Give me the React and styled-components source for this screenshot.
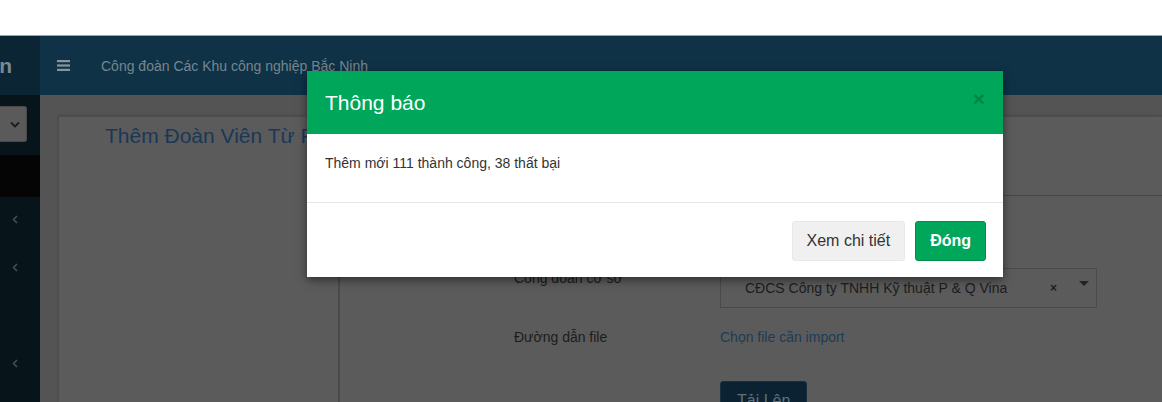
import React from 'react';
import styled, { createGlobalStyle } from 'styled-components';

const Global = createGlobalStyle`
  html, body { margin: 0; padding: 0; height: 100%; overflow: hidden; background: #fff; }
  body { font-family: "Liberation Sans", Arial, sans-serif; font-size: 14px; }
  #root { height: 100%; }
  * { box-sizing: border-box; }
`;

const Page = styled.div`
  height: 100%;
  display: flex;
  flex-direction: column;
  position: relative;
`;

const TopStrip = styled.div`
  height: 35px;
  flex-shrink: 0;
  background: #fff;
`;

const Frame = styled.div`
  flex: 1;
  min-height: 0;
  display: flex;
  flex-direction: column;
  border-top: 1px solid #98a3aa;
`;

const Header = styled.header`
  height: 59px;
  flex-shrink: 0;
  display: flex;
  align-items: center;
  background: #0f3246;
`;

const Logo = styled.div`
  width: 40px;
  height: 100%;
  background: #0c2535;
  display: flex;
  align-items: center;
  justify-content: flex-end;
  padding-right: 28px;
  overflow: hidden;
  white-space: nowrap;
  font-size: 21px;
  font-weight: bold;
  color: #7b8891;
`;

const Toggle = styled.span`
  display: flex;
  margin-left: 17px;
  color: #8695a0;
`;

const HeaderTitle = styled.span`
  margin-left: 31px;
  font-size: 14px;
  color: #75868f;
`;

const Main = styled.div`
  flex: 1;
  min-height: 0;
  display: flex;
`;

const Sidebar = styled.aside`
  width: 40px;
  flex-shrink: 0;
  background: #07151a;
  display: flex;
  flex-direction: column;
`;

const SideSelect = styled.div`
  margin-top: 11px;
  width: 27px;
  height: 36px;
  background: #5a5a5a;
  border: 1px solid #4a4a4a;
  border-left: none;
  border-radius: 0 3px 3px 0;
  display: flex;
  align-items: center;
  justify-content: flex-end;
  padding-right: 6px;
  color: #1c1c1c;
`;

const UserBand = styled.div`
  margin-top: 13px;
  height: 42px;
  background: #050505;
`;

const MenuItem = styled.div`
  height: ${p => p.$h}px;
  display: flex;
  align-items: center;
  padding-left: 12px;
  color: #3a505c;
`;

const Content = styled.main`
  flex: 1;
  min-width: 0;
  background: #545454;
  padding: 20px 0 0 19px;
  display: flex;
`;

const Box = styled.section`
  flex: 1;
  background: #5b5b5b;
  border-top: 2px solid #4e4e4e;
  box-shadow: -1px 0 2px rgba(0, 0, 0, 0.12);
  display: flex;
  flex-direction: column;
`;

const BoxTitle = styled.h3`
  margin: 7px 0 0 46px;
  font-size: 21px;
  line-height: 24px;
  font-weight: normal;
  color: #1a3856;
  white-space: nowrap;
`;

const Panel = styled.div`
  flex: 1;
  margin: 47px 0 0 279px;
  border-top: 1px solid #474747;
  border-left: 2px solid #4a4a4a;
  padding: 72px 0 0 174px;
  display: flex;
  flex-direction: column;
`;

const FormRow = styled.div`
  display: flex;
  align-items: flex-start;
  margin-top: ${p => p.$mt || 0}px;
`;

const Label = styled.label`
  width: 206px;
  flex-shrink: 0;
  line-height: 20px;
  color: #1c1c1c;
`;

const FakeSelect = styled.div`
  width: 377px;
  height: 40px;
  border: 1px solid #4a4a4a;
  display: flex;
  align-items: center;
  padding: 0 7px 0 24px;
  color: #1d1d1d;
`;

const SelectText = styled.span`
  flex: 1;
`;

const Clear = styled.span`
  font-size: 12px;
  font-weight: bold;
  margin-right: 22px;
`;

const Caret = styled.span`
  align-self: flex-start;
  margin-top: 12px;
  width: 0;
  height: 0;
  border-left: 5px solid transparent;
  border-right: 5px solid transparent;
  border-top: 5px solid #222;
`;

const LinkText = styled.a`
  line-height: 20px;
  color: #1b3c57;
  text-decoration: none;
`;

const UploadButton = styled.button`
  font-family: inherit;
  font-size: 16px;
  height: 40px;
  padding: 0 16px;
  background: #0a2232;
  border: 1px solid #1a2f3c;
  border-radius: 3px;
  color: #5e707b;
`;

const Modal = styled.div`
  position: absolute;
  left: 307px;
  top: 71px;
  width: 696px;
  background: #fff;
  box-shadow: 0 3px 9px rgba(0, 0, 0, 0.5);
`;

const ModalHeader = styled.div`
  height: 63px;
  background: #00a65a;
  display: flex;
  align-items: center;
  justify-content: space-between;
  padding: 0 18px;
`;

const ModalTitle = styled.h4`
  margin: 0;
  font-size: 21px;
  font-weight: normal;
  color: #fff;
`;

const Close = styled.span`
  font-size: 21px;
  font-weight: bold;
  line-height: 1;
  color: #008548;
  margin-top: -8px;
`;

const ModalBody = styled.div`
  padding: 19px 18px 29px;
  line-height: 20px;
  color: #333;
  border-bottom: 1px solid #e5e5e5;
`;

const ModalFooter = styled.div`
  display: flex;
  justify-content: flex-end;
  gap: 10px;
  padding: 18px 17px 16px;
`;

const Btn = styled.button`
  font-family: inherit;
  font-size: 16px;
  font-weight: ${p => (p.$primary ? 'bold' : 'normal')};
  height: 40px;
  padding: 0 ${p => (p.$primary ? 14 : 14)}px;
  border-radius: 3px;
  border: 1px solid ${p => (p.$primary ? '#008d4c' : '#e8e8e8')};
  background: ${p => (p.$primary ? '#00a65a' : '#f0f0f0')};
  color: ${p => (p.$primary ? '#fff' : '#333')};
`;

const Bars = () => (
  <svg width="13" height="11" viewBox="0 0 13 11">
    <rect x="0" y="0" width="13" height="2.2" fill="currentColor" />
    <rect x="0" y="4.4" width="13" height="2.2" fill="currentColor" />
    <rect x="0" y="8.8" width="13" height="2.2" fill="currentColor" />
  </svg>
);

const ChevronDown = () => (
  <svg width="10" height="7" viewBox="0 0 10 7">
    <polyline points="1,1.5 5,5.5 9,1.5" fill="none" stroke="currentColor" strokeWidth="1.8" />
  </svg>
);

const ChevronLeft = () => (
  <svg width="6" height="9" viewBox="0 0 6 9">
    <polyline points="5,1 1.5,4.5 5,8" fill="none" stroke="currentColor" strokeWidth="1.6" />
  </svg>
);

const menu = [
  { h: 44, icon: true },
  { h: 52, icon: true },
  { h: 46, icon: false },
  { h: 48, icon: true },
];

export default function App() {
  return (
    <>
      <Global />
      <Page>
        <TopStrip />
        <Frame>
          <Header>
            <Logo>Admin</Logo>
            <Toggle><Bars /></Toggle>
            <HeaderTitle>Công đoàn Các Khu công nghiệp Bắc Ninh</HeaderTitle>
          </Header>
          <Main>
            <Sidebar>
              <SideSelect><ChevronDown /></SideSelect>
              <UserBand />
              {menu.map((m, i) => (
                <MenuItem key={i} $h={m.h}>{m.icon && <ChevronLeft />}</MenuItem>
              ))}
            </Sidebar>
            <Content>
              <Box>
                <BoxTitle>Thêm Đoàn Viên Từ File</BoxTitle>
                <Panel>
                  <FormRow>
                    <Label>Công đoàn cơ sở</Label>
                    <FakeSelect>
                      <SelectText>CĐCS Công ty TNHH Kỹ thuật P &amp; Q Vina</SelectText>
                      <Clear>×</Clear>
                      <Caret />
                    </FakeSelect>
                  </FormRow>
                  <FormRow $mt={19}>
                    <Label>Đường dẫn file</Label>
                    <LinkText href="#">Chọn file cần import</LinkText>
                  </FormRow>
                  <FormRow $mt={34}>
                    <Label />
                    <UploadButton>Tải Lên</UploadButton>
                  </FormRow>
                </Panel>
              </Box>
            </Content>
          </Main>
        </Frame>
        <Modal role="dialog">
          <ModalHeader>
            <ModalTitle>Thông báo</ModalTitle>
            <Close>×</Close>
          </ModalHeader>
          <ModalBody>Thêm mới 111 thành công, 38 thất bại</ModalBody>
          <ModalFooter>
            <Btn>Xem chi tiết</Btn>
            <Btn $primary>Đóng</Btn>
          </ModalFooter>
        </Modal>
      </Page>
    </>
  );
}
